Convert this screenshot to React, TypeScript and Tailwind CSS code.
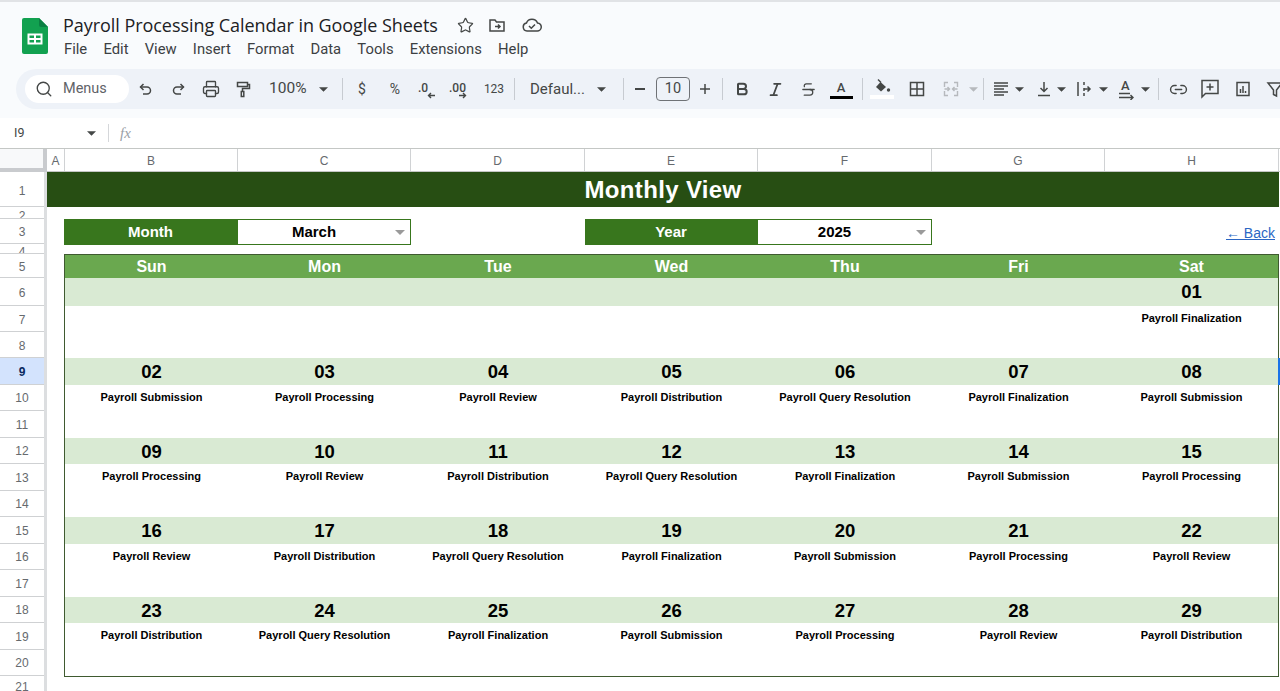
import React from "react";
import { Search, Star, Printer, Link2, Bold, Italic, Strikethrough } from "lucide-react";

const stroke = "#444746";
const Tri = ({ c = "#444746" }: { c?: string }) => (
  <svg width="9" height="5" viewBox="0 0 10 5"><path d="M0 0h10L5 5z" fill={c} /></svg>
);
const S = ({ w, children }: { w: string; children?: React.ReactNode }) => (
  <div className={`${w} h-full flex items-center justify-center shrink-0`}>{children}</div>
);
const Sep = () => <div className="w-px h-[22px] bg-[#c7cbd1]" />;

const Ic = ({ children, size = 18 }: { children: React.ReactNode; size?: number }) => (
  <svg width={size} height={size} viewBox="0 0 18 18" fill="none" stroke={stroke} strokeWidth="1.5">{children}</svg>
);

const rowsAfter = [
  ["2", "h-[12px] pt-[6px]"], ["3", "h-[25px] pt-[2px]"], ["4", "h-[10px] pt-[6px]"], ["5", "h-[24px] pt-[2px]"], ["6", "h-[28px] pt-[2px]"], ["7", "h-[26px] pt-[3px]"], ["8", "h-[26px] pt-[3px]"],
];

const labels: Record<string, string> = {
  S: "Payroll Submission", P: "Payroll Processing", R: "Payroll Review", D: "Payroll Distribution", Q: "Payroll Query Resolution", F: "Payroll Finalization",
};
const order = ["S", "P", "R", "D", "Q", "F"];
const weeks: number[][] = [[2,3,4,5,6,7,8],[9,10,11,12,13,14,15],[16,17,18,19,20,21,22],[23,24,25,26,27,28,29]];
const label = (d: number) => labels[order[(d - 2 + 600) % 6]];
const pad = (n: number) => String(n).padStart(2, "0");

const calCols = "grid grid-cols-[173px_173px_174px_173px_174px_173px_1fr]";

const Picker = ({ title, value, cols }: { title: string; value: string; cols: string }) => (
  <div className={`w-[347px] grid ${cols} h-[25px]`}>
    <div className="bg-[#38761d] text-white font-bold text-[15px] pt-[1px] flex items-center justify-center">{title}</div>
    <div className="relative bg-white border border-[#38761d] text-black font-bold text-[15px] pt-[1px] flex items-center justify-center">
      <span className="pr-[20px]">{value}</span>
      <div className="absolute right-[5px] top-[10px]"><svg width="10" height="5" viewBox="0 0 10 5"><path d="M0 0h10L5 5z" fill="#9a9a9a" /></svg></div>
    </div>
  </div>
);

const menu = ["File", "Edit", "View", "Insert", "Format", "Data", "Tools", "Extensions", "Help"];

export default function App() {
  return (
    <div className="w-[1280px] h-[691px] overflow-hidden bg-white text-[#202124] font-['Liberation_Sans',sans-serif]">
      <div className="h-[118px] bg-[#f9fbfd] border-t-2 border-[#e1e3e6] flex flex-col">
        <div className="h-[67px] flex">
          <div className="w-[63px] shrink-0 pl-[22px] pt-[16px]">
            <svg width="26" height="36" viewBox="0 0 26 36">
              <path d="M2 0h15l9 9v25a2 2 0 0 1-2 2H2a2 2 0 0 1-2-2V2a2 2 0 0 1 2-2z" fill="#12a150" />
              <path d="M17 0l9 9h-7a2 2 0 0 1-2-2z" fill="#0b8043" />
              <path d="M5.5 15.5h15v11h-15z" fill="#fff" />
              <path d="M7.5 17.5h4.5v2.5H7.5zM14 17.5h4.5v2.5H14zM7.5 22h4.5v2.5H7.5zM14 22h4.5v2.5H14z" fill="#12a150" />
            </svg>
          </div>
          <div className="flex flex-col">
            <div className="flex items-center h-[22px] mt-[12px]">
              <span className="text-[18px] leading-[22px] font-['Open_Sans',sans-serif] tracking-[-0.05px] w-[394px] whitespace-nowrap">Payroll Processing Calendar in Google Sheets</span>
              <Star size={17} strokeWidth={1.7} color={stroke} className="ml-[0px]" />
              <div className="ml-[14px]">
                <Ic><path d="M2 4h5l1.5 2H16v9H2z" /><path d="M7 10.500h5M10 8.500l2 2-2 2" /></Ic>
              </div>
              <div className="ml-[16px]">
                <svg width="20" height="16" viewBox="0 0 20 16" fill="none" stroke={stroke} strokeWidth="1.5"><path d="M5 14a4 4 0 0 1-.6-7.900A6 6 0 0 1 15.500 6a4 4 0 0 1-.5 8z" /><path d="M7 9l2.300 2.300L13 7.500" /></svg>
              </div>
            </div>
            <div className="flex gap-[16.200px] mt-[3px] ml-px text-[14.800px] leading-[20px] font-['Roboto',sans-serif] text-[#3c4043]">
              {menu.map((m) => <span key={m}>{m}</span>)}
            </div>
          </div>
        </div>
        <div className="ml-[16px] h-[40px] bg-[#eef2f8] rounded-l-[20px] flex items-center pl-[9px] overflow-hidden text-[#444746] font-['Roboto',sans-serif]">
          <div className="w-[104px] h-[28px] shrink-0 bg-white rounded-full flex items-center pl-[10px] gap-[10px] text-[14.500px] text-[#5f6368]">
            <Search size={18} strokeWidth={1.8} color={stroke} />
            <span>Menus</span>
          </div>
          <S w="w-[1px]" />
          <S w="w-[32px]"><Ic><path d="M6.500 4L3.500 7l3 3" /><path d="M3.500 7H10a3.500 3.500 0 0 1 0 7H6" /></Ic></S>
          <S w="w-[32px]"><Ic><path d="M11.500 4l3 3-3 3" /><path d="M14.500 7H8a3.500 3.500 0 0 0 0 7h4" /></Ic></S>
          <S w="w-[33px]"><Printer size={18} strokeWidth={1.8} color={stroke} /></S>
          <S w="w-[31px]"><Ic><path d="M3.500 2.500h10v4h-10zM13.500 4.500h2v4H8.500v3" /><path d="M7.300 11.500h2.500v5H7.300z" /></Ic></S>
          <div className="w-[76px] h-full shrink-0 flex items-center pl-[11px] text-[15.500px]">
            <span>100%</span>
            <div className="ml-[12px] flex"><Tri /></div>
          </div>
          <S w="w-[16px]"><Sep /></S>
          <S w="w-[24px]"><span className="text-[14px]">$</span></S>
          <S w="w-[42px]"><span className="text-[14px]">%</span></S>
          <S w="w-[22px]">
            <div className="relative w-[20px] h-[22px]">
              <span className="absolute left-[1px] top-[1px] text-[12px] font-medium">.0</span>
              <svg className="absolute left-[10px] top-[14px]" width="9" height="7" viewBox="0 0 9 7" fill="none" stroke={stroke} strokeWidth="1.400"><path d="M8 3.500H1.500M4 1L1.500 3.500 4 6" /></svg>
            </div>
          </S>
          <S w="w-[44px]">
            <div className="relative w-[24px] h-[22px]">
              <span className="absolute left-[1px] top-[1px] text-[12px] font-medium">.00</span>
              <svg className="absolute left-[10px] top-[14px]" width="9" height="7" viewBox="0 0 9 7" fill="none" stroke={stroke} strokeWidth="1.400"><path d="M1 3.500h6.500M5 1l2.500 2.500L5 6" /></svg>
            </div>
          </S>
          <S w="w-[24px]"><span className="text-[12px]">123</span></S>
          <S w="w-[16px]"><Sep /></S>
          <div className="w-[93px] h-full shrink-0 flex items-center pl-[8px] text-[15px]">
            <span>Defaul...</span>
            <div className="ml-[12px] flex"><Tri /></div>
          </div>
          <S w="w-[16px]"><Sep /></S>
          <S w="w-[18px]"><div className="w-[10px] h-[1.500px] bg-[#444746]" /></S>
          <S w="w-[7px]" />
          <div className="w-[34px] h-[24px] shrink-0 border border-[#6f7276] rounded-[4px] flex items-center justify-center text-[14.500px]">10</div>
          <S w="w-[30px]"><Ic><path d="M9 4v10M4 9h10" /></Ic></S>
          <S w="w-[4px]"><Sep /></S>
          <S w="w-[36px]"><Bold size={16} strokeWidth={3} color={stroke} /></S>
          <S w="w-[30px]"><Italic size={17} strokeWidth={2.4} color={stroke} /></S>
          <S w="w-[36px]"><Strikethrough size={17} strokeWidth={1.8} color={stroke} /></S>
          <S w="w-[30px]">
            <div className="flex flex-col items-center">
              <span className="text-[13px] leading-[15px] font-medium">A</span>
              <div className="w-[23px] h-[3px] bg-black mt-[1px]" />
            </div>
          </S>
          <S w="w-[12px]"><Sep /></S>
          <S w="w-[28px]">
            <div className="flex flex-col items-center">
              <svg width="20" height="15" viewBox="0 0 20 15" fill="none"><path d="M6 .5l3 3" stroke={stroke} strokeWidth="1.400" /><path d="M8.500 3l5.500 5-5 4.500L4 8z" fill={stroke} /><circle cx="16.500" cy="11" r="1.700" fill={stroke} /></svg>
              <div className="w-[24px] h-[4px] bg-white mt-[1px]" />
            </div>
          </S>
          <S w="w-[42px]"><Ic><path d="M2.500 2.500h13v13h-13zM9 2.500v13M2.500 9h13" /></Ic></S>
          <S w="w-[26px]">
            <svg width="18" height="18" viewBox="0 0 18 18" fill="none" stroke="#b6b9bd" strokeWidth="1.400"><path d="M6 2.500H2.500V7M12 2.500h3.500V7M6 15.500H2.500V11M12 15.500h3.500V11" /><path d="M2.500 9h4.500M5.500 7l2 2-2 2M15.500 9H11M12.500 7l-2 2 2 2" /></svg>
          </S>
          <S w="w-[18px]"><Tri c="#b6b9bd" /></S>
          <S w="w-[2px]"><Sep /></S>
          <S w="w-[6px]" />
          <S w="w-[22px]"><Ic><path d="M2 3h14M2 6h14M2 9h10M2 12h14M2 15h10" strokeWidth="1.300" /></Ic></S>
          <S w="w-[14px]"><Tri /></S>
          <S w="w-[8px]" />
          <S w="w-[20px]"><Ic><path d="M9 2v9M5.500 8L9 11.500 12.500 8M3 15.500h12" /></Ic></S>
          <S w="w-[14px]"><Tri /></S>
          <S w="w-[6px]" />
          <S w="w-[20px]"><Ic><path d="M3 2v14M9 2v3M9 8v3M9 13v3M9 9h6M12.500 6.500L15 9l-2.500 2.500" /></Ic></S>
          <S w="w-[2px]" />
          <S w="w-[14px]"><Tri /></S>
          <S w="w-[7px]" />
          <S w="w-[20px]">
            <div className="relative w-[18px] h-[22px]">
              <span className="absolute left-[3px] top-[0px] text-[13px] leading-[15px] font-medium">A</span>
              <svg className="absolute left-0 top-[14px]" width="18" height="8" viewBox="0 0 18 8" fill="none" stroke={stroke} strokeWidth="1.400"><path d="M1 1.500h11M1 5.500h14M12.500 3l2.500 2.500-2.500 2.500" /></svg>
            </div>
          </S>
          <S w="w-[1px]" />
          <S w="w-[14px]"><Tri /></S>
          <S w="w-[12px]"><Sep /></S>
          <S w="w-[28px]"><Link2 size={19} strokeWidth={1.8} color={stroke} /></S>
          <S w="w-[36px]"><svg width="18" height="20" viewBox="0 0 18 20" fill="none" stroke={stroke} strokeWidth="1.500"><path d="M1 1.500h16v13H4.500L1 18z" /><path d="M9 4.500v7M5.500 8h7" /></svg></S>
          <S w="w-[30px]"><Ic><path d="M3 2.500h12v13H3z" /><path d="M6.500 13V9M9 13V6M11.500 13v-2" /></Ic></S>
          <S w="w-[34px]"><Ic><path d="M2 3h14l-5.500 7v6l-3-1.500V10z" /></Ic></S>
        </div>
      </div>

      <div className="h-[30px] bg-white flex items-center font-['Roboto',sans-serif] text-[#444746]">
        <div className="w-[87px] pl-[14px] text-[12.500px]">I9</div>
        <Tri />
        <div className="w-px h-[18px] bg-[#d5d7da] ml-[12px]" />
        <span className="ml-[11px] text-[15px] italic text-[#9aa0a6] font-['Liberation_Serif',serif]">fx</span>
      </div>

      <div className="flex h-[24px] border-t border-[#c4c7c5]">
        <div className="w-[47px] shrink-0 bg-[#f8f9fa] border-r-[4px] border-b-[4px] border-[#c9cbce]" />
        <div className="flex-1 grid grid-cols-[18px_173px_173px_174px_173px_174px_173px_174px] text-[12px] text-[#666a6e] border-b border-[#c4c7c5]">
          {["A", "B", "C", "D", "E", "F", "G", "H"].map((c) => (
            <div key={c} className="flex items-center justify-center pt-px border-r border-[#d0d2d4]">{c}</div>
          ))}
        </div>
      </div>

      <div className="flex h-[519px] overflow-hidden">
        <div className="w-[47px] shrink-0 border-r-[3px] border-[#dcdee0] text-[12px] text-[#666a6e]">
          <div className="h-[35px] pt-[4px] flex items-center justify-center border-b border-[#cfd1d3]">1</div>
          {rowsAfter.map(([n, h]) => (
            <div key={n} className={`${h} flex items-center justify-center border-b border-[#cfd1d3] overflow-hidden`}>{n}</div>
          ))}
          {Array.from({ length: 12 }, (_, i) => i + 9).map((n) => (
            <div key={n} className={`h-[26.500px] flex items-center justify-center border-b border-[#cfd1d3] ${n === 9 ? "pt-[3px] bg-[#d3e3fd] font-bold text-[#0b2a60]" : "pt-[2px]"}`}>{n}</div>
          ))}
          <div className="h-[15px] pt-[6px] flex items-center justify-center overflow-hidden">21</div>
        </div>

        <div className="w-[1233px] shrink-0 relative">
          <div className="h-[35px] bg-[#274e13] text-white font-bold text-[24px] tracking-[0.35px] flex items-center justify-center w-[1232px]">Monthly View</div>
          <div className="h-[12px]" />
          <div className="flex pl-[17px] h-[25px]">
            <Picker title="Month" value="March" cols="grid-cols-[173px_174px]" />
            <div className="w-[174px]" />
            <Picker title="Year" value="2025" cols="grid-cols-[172px_175px]" />
            <div className="flex-1 flex justify-end items-end pr-[4px]">
              <span className="text-[14px] leading-[16px] text-[#2a66c4] underline mb-[3px] mr-[1px]">← Back</span>
            </div>
          </div>
          <div className="h-[10px]" />
          <div className="ml-[17px] w-[1215px] h-[423px] border border-[#3f5a30] border-r-[#3f5a30]">
            <div className={`${calCols} h-[23px] bg-[#6aa84f] text-white font-bold text-[16px]`}>
              {["Sun", "Mon", "Tue", "Wed", "Thu", "Fri", "Sat"].map((d) => (
                <div key={d} className="flex items-center justify-center">{d}</div>
              ))}
            </div>
            <div className={`${calCols} h-[28px] bg-[#d9ead3]`}>
              <div className="col-start-7 flex items-center justify-center font-bold text-[18.500px] text-black">01</div>
            </div>
            <div className={`${calCols} h-[52px]`}>
              <div className="col-start-7 text-center font-bold text-[11px] text-black pt-[6px] leading-[13px]">{labels.F}</div>
            </div>
            {weeks.map((w) => (
              <div key={w[0]} className="h-[79.500px]">
                <div className={`${calCols} h-[26.500px] bg-[#d9ead3]`}>
                  {w.map((d) => (
                    <div key={d} className="flex items-center justify-center font-bold text-[18.500px] text-black">{pad(d)}</div>
                  ))}
                </div>
                <div className={calCols}>
                  {w.map((d) => (
                    <div key={d} className="text-center font-bold text-[11px] text-black pt-[6px] leading-[13px] whitespace-nowrap">{label(d)}</div>
                  ))}
                </div>
              </div>
            ))}
          </div>
          <div className="absolute left-[1231px] top-[186px] w-[2px] h-[27px] bg-[#1a73e8]" />
        </div>
      </div>
    </div>
  );
}
